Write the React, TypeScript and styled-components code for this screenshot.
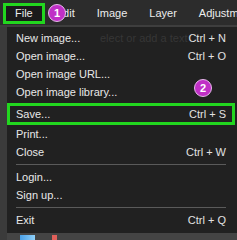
import React from 'react';
import styled, { createGlobalStyle } from 'styled-components';

const GlobalStyle = createGlobalStyle`
  html, body {
    margin: 0;
    padding: 0;
    background: #3b3b3b;
  }
  body {
    font-family: "Liberation Sans", Arial, sans-serif;
  }
`;

// ---------------------------------------------------------------------------
// layout
// ---------------------------------------------------------------------------

const Screen = styled.div`
  position: relative;
  width: 237px;
  height: 240px;
  overflow: hidden;
  display: flex;
  flex-direction: column;
  background: #3b3b3b;
`;

const MenuBar = styled.div`
  display: flex;
  align-items: center;
  height: 24px;
  padding: 1px 0 0 3px;
  background: #2c2c2c;
  border-bottom: 2px solid #3e3e3e;
  box-sizing: content-box;
  font-size: 11px;
  color: #ececec;
  white-space: nowrap;
`;

const BarItem = styled.div<{ $active?: boolean }>`
  flex: none;
  display: flex;
  align-items: center;
  height: ${p => (p.$active ? 21 : 24)}px;
  padding: 0 ${p => (p.$active ? 9 : 11)}px;
  box-sizing: border-box;
  background: ${p => (p.$active ? '#1b1b1b' : 'transparent')};
  border: ${p => (p.$active ? '3px solid #22d61f' : 'none')};
`;

const Workspace = styled.div`
  flex: 1;
  display: flex;
  flex-direction: column;
  padding-left: 7px;
`;

const Dropdown = styled.div`
  position: relative;
  display: flex;
  flex-direction: column;
  width: 230px;
  height: 206px;
  box-sizing: border-box;
  padding-top: 2px;
  background: #212121;
  font-size: 11px;
  color: #e8e8e8;
`;

const Item = styled.div<{ $highlight?: boolean }>`
  position: relative;
  display: flex;
  align-items: center;
  justify-content: space-between;
  height: ${p => (p.$highlight ? 22 : 18)}px;
  margin: ${p => (p.$highlight ? '2px 2px 0 0' : '0')};
  padding: 0 ${p => (p.$highlight ? 6 : 11)}px 0 ${p => (p.$highlight ? 6 : 9)}px;
  box-sizing: border-box;
  border: ${p => (p.$highlight ? '3px solid #22d61f' : 'none')};
  white-space: nowrap;
`;

const Shortcut = styled.span`
  color: #e2e2e2;
`;

const Separator = styled.div`
  height: 1px;
  margin: 3px 11px 3px 9px;
  background: #5a5a5a;
`;

const GhostText = styled.span`
  position: absolute;
  left: 93px;
  top: 0;
  line-height: 18px;
  color: #363636;
`;

const BottomStrip = styled.div`
  flex: 1;
  display: flex;
  align-items: flex-end;
  gap: 17px;
  padding-left: 13px;
  background: #444;
`;

const Thumb = styled.div<{ $color: string; $width: number }>`
  width: ${p => p.$width}px;
  height: 5px;
  background: ${p => p.$color};
`;

const Badge = styled.div<{ $x: number; $y: number }>`
  position: absolute;
  left: ${p => p.$x}px;
  top: ${p => p.$y}px;
  width: 18px;
  height: 18px;
  border-radius: 50%;
  background: #c02fc6;
  border: 1px solid #e6b8ea;
  box-sizing: border-box;
  display: flex;
  align-items: center;
  justify-content: center;
  color: #fff;
  font-size: 11px;
  font-weight: bold;
`;

// ---------------------------------------------------------------------------
// data
// ---------------------------------------------------------------------------

type Entry =
  | { kind: 'item'; label: string; shortcut?: string; highlight?: boolean; ghost?: string }
  | { kind: 'sep' };

const entries: Entry[] = [
  { kind: 'item', label: 'New image...', shortcut: 'Ctrl + N', ghost: 'elect or add a text' },
  { kind: 'item', label: 'Open image...', shortcut: 'Ctrl + O' },
  { kind: 'item', label: 'Open image URL...' },
  { kind: 'item', label: 'Open image library...' },
  { kind: 'item', label: 'Save...', shortcut: 'Ctrl + S', highlight: true },
  { kind: 'item', label: 'Print...' },
  { kind: 'item', label: 'Close', shortcut: 'Ctrl + W' },
  { kind: 'sep' },
  { kind: 'item', label: 'Login...' },
  { kind: 'item', label: 'Sign up...' },
  { kind: 'sep' },
  { kind: 'item', label: 'Exit', shortcut: 'Ctrl + Q' },
];

const barItems = [
  { label: 'File', active: true },
  { label: 'Edit' },
  { label: 'Image' },
  { label: 'Layer' },
  { label: 'Adjustments' },
];

export default function App() {
  return (
    <>
      <GlobalStyle />
      <Screen>
        <MenuBar>
          {barItems.map(b => (
            <BarItem key={b.label} $active={b.active}>
              {b.label}
            </BarItem>
          ))}
        </MenuBar>
        <Workspace>
          <Dropdown>
            {entries.map((e, i) =>
              e.kind === 'sep' ? (
                <Separator key={i} />
              ) : (
                <Item key={i} $highlight={e.highlight}>
                  <span>{e.label}</span>
                  {e.ghost && <GhostText>{e.ghost}</GhostText>}
                  {e.shortcut && <Shortcut>{e.shortcut}</Shortcut>}
                </Item>
              )
            )}
          </Dropdown>
          <BottomStrip>
            <Thumb $color="linear-gradient(90deg, #4aa0e8, #8fd0f8)" $width={15} />
            <Thumb $color="#e0605a" $width={5} />
          </BottomStrip>
        </Workspace>
        <Badge $x={48} $y={4}>1</Badge>
        <Badge $x={194} $y={79}>2</Badge>
      </Screen>
    </>
  );
}
